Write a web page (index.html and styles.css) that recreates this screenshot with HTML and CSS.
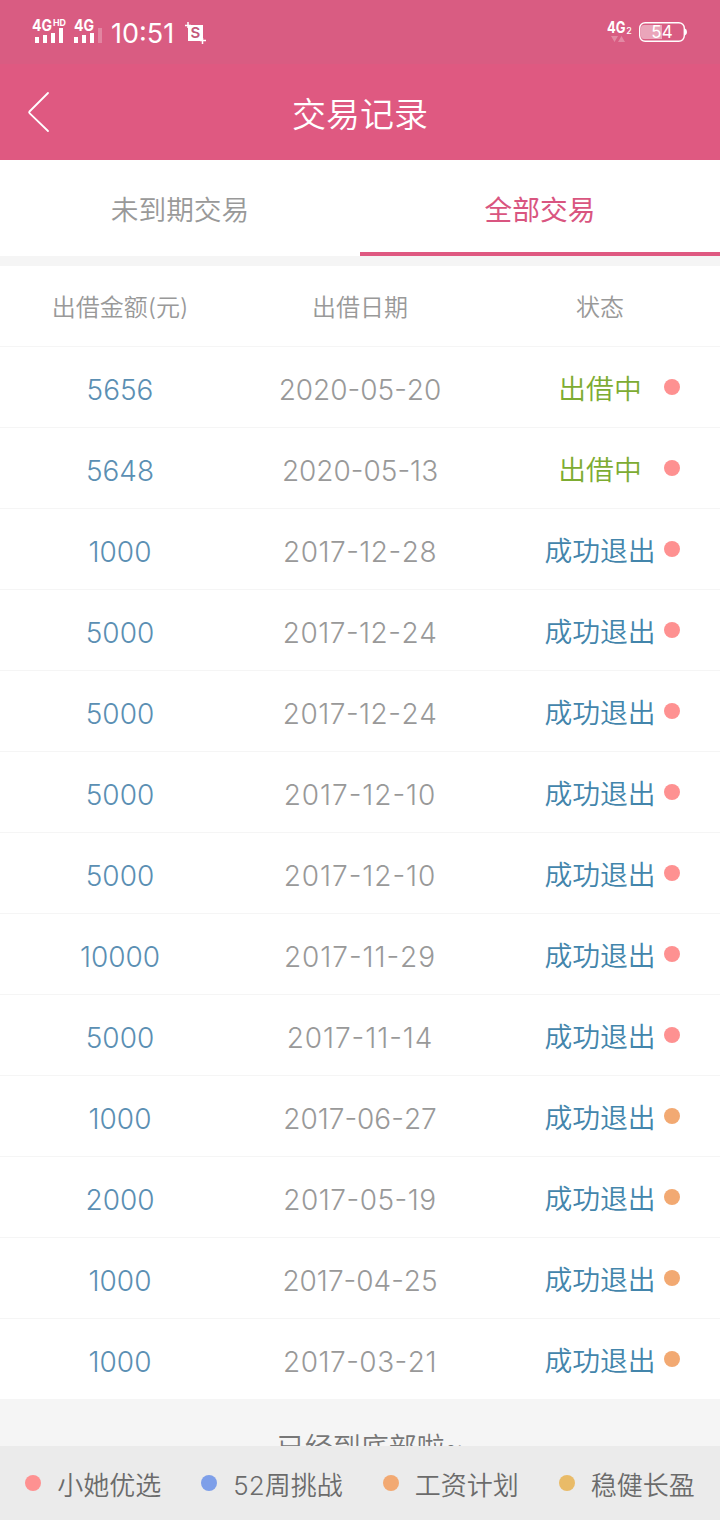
FILE: index.html
```html
<!DOCTYPE html>
<html lang="zh-CN">
<head>
    <meta charset="UTF-8">
    <meta name="viewport" content="width=device-width, initial-scale=1.0">
    <title>交易记录</title>
    <link rel="stylesheet" href="styles.css">
</head>
<body>
    <div class="page">
        <div class="statusbar">
            <svg class="signal" width="72" height="34" viewBox="0 -4 72 34">
                <g fill="#fff">
                    <text class="net" x="0" y="14" textLength="20" lengthAdjust="spacingAndGlyphs">4G</text>
                    <text class="net-hd" x="21" y="9" textLength="13" lengthAdjust="spacingAndGlyphs">HD</text>
                    <path d="M3 20h4v6h-4zM11 18h4v8h-4zM19 16h4v10h-4zM27 11h4v15h-4z"/>
                    <text class="net" x="42" y="14" textLength="20" lengthAdjust="spacingAndGlyphs">4G</text>
                    <path d="M42 20h4v6h-4zM50 18h4v8h-4zM58 16h4v10h-4z"/>
                    <path d="M66 11h4v15h-4z" opacity=".25"/>
                </g>
            </svg>
            <span class="clock">10:51</span>
            <svg class="shot" width="21" height="22" viewBox="0 0 21 22">
                <path d="M3 3h15v16h-15z" fill="#fff"/>
                <path d="M0 3.500h6M3 0v6M15 18.500h6M17.500 16v6" stroke="#fff" stroke-width="1.500"/>
                <text class="shot-s" x="10.300" y="16" text-anchor="middle">S</text>
            </svg>
            <svg class="net-right" width="26" height="30" viewBox="0 -4 26 30">
                <g fill="#fff">
                    <text class="net" x="0" y="14" textLength="18.500" lengthAdjust="spacingAndGlyphs">4G</text>
                    <text class="net-sub" x="19.200" y="15">2</text>
                    <path d="M4 17h7l-3.500 6zM11 23h7l-3.500-6z" opacity=".28"/>
                </g>
            </svg>
            <svg class="battery" width="50" height="22" viewBox="0 0 50 22">
                <rect x="1.700" y="1.700" width="44.600" height="18.600" rx="5.500" fill="none" stroke="#fff" stroke-width="1.400"/>
                <path d="M6 4h18v14h-18a3 3 0 0 1-3-3v-8a3 3 0 0 1 3-3z" fill="#fff" opacity=".45"/>
                <path d="M47 7.500q2 .5 2 3.500t-2 3.500z" fill="#fff"/>
                <text class="battery-num" x="24" y="17" text-anchor="middle">54</text>
            </svg>
        </div>

        <div class="navbar">
            <svg class="back" width="24" height="42" viewBox="0 0 24 42">
                <path d="M21 2L2.500 20.500q-.8.800 0 1.600L21 40" fill="none" stroke="#fff" stroke-width="1.800" stroke-linecap="round"/>
            </svg>
            <h1>交易记录</h1>
        </div>

        <div class="tabs">
            <div class="tab">未到期交易</div>
            <div class="tab active">全部交易</div>
        </div>

        <div class="list">
            <div class="row head"><span>出借金额(元)</span><span>出借日期</span><span>状态</span></div>
            <div class="row"><span class="amount">5656</span><span class="date">2020-05-20</span><span class="state lending">出借中</span><i class="dot red"></i></div>
            <div class="row"><span class="amount">5648</span><span class="date">2020-05-13</span><span class="state lending">出借中</span><i class="dot red"></i></div>
            <div class="row"><span class="amount">1000</span><span class="date loose">2017-12-28</span><span class="state">成功退出</span><i class="dot red"></i></div>
            <div class="row"><span class="amount">5000</span><span class="date loose">2017-12-24</span><span class="state">成功退出</span><i class="dot red"></i></div>
            <div class="row"><span class="amount">5000</span><span class="date loose">2017-12-24</span><span class="state">成功退出</span><i class="dot red"></i></div>
            <div class="row"><span class="amount">5000</span><span class="date looser">2017-12-10</span><span class="state">成功退出</span><i class="dot red"></i></div>
            <div class="row"><span class="amount">5000</span><span class="date looser">2017-12-10</span><span class="state">成功退出</span><i class="dot red"></i></div>
            <div class="row"><span class="amount">10000</span><span class="date looser">2017-11-29</span><span class="state">成功退出</span><i class="dot red"></i></div>
            <div class="row"><span class="amount">5000</span><span class="date looser">2017-11-14</span><span class="state">成功退出</span><i class="dot red"></i></div>
            <div class="row"><span class="amount">1000</span><span class="date">2017-06-27</span><span class="state">成功退出</span><i class="dot orange"></i></div>
            <div class="row"><span class="amount">2000</span><span class="date loose">2017-05-19</span><span class="state">成功退出</span><i class="dot orange"></i></div>
            <div class="row"><span class="amount">1000</span><span class="date">2017-04-25</span><span class="state">成功退出</span><i class="dot orange"></i></div>
            <div class="row"><span class="amount">1000</span><span class="date loose">2017-03-21</span><span class="state">成功退出</span><i class="dot orange"></i></div>
        </div>

        <div class="bottom-tip">已经到底部啦<span class="tilde">~</span></div>

        <div class="legend">
            <div class="legend-item"><i class="dot red"></i>小她优选</div>
            <div class="legend-item"><i class="dot blue"></i>52周挑战</div>
            <div class="legend-item"><i class="dot orange"></i>工资计划</div>
            <div class="legend-item"><i class="dot yellow"></i>稳健长盈</div>
        </div>
    </div>
</body>
</html>
```

FILE: styles.css
```css
* {
    box-sizing: border-box;
}
body {
    margin: 0;
    font-family: Inter, 'Noto Sans CJK SC', sans-serif;
    font-weight: 350;
    background-color: #f5f5f5;
}
.page {
    display: flex;
    flex-direction: column;
    width: 720px;
    height: 1520px;
    overflow: hidden;
}

/* status bar */
.statusbar {
    display: flex;
    align-items: flex-start;
    flex: none;
    height: 64px;
    padding: 0 32px;
    background-color: #d95c82;
    color: #ffffff;
}
.signal {
    margin-top: 13px;
}
.net {
    font-size: 16px;
    font-weight: 700;
}
.net-hd {
    font-size: 9px;
    font-weight: 700;
}
.net-sub {
    font-size: 9px;
    font-weight: 500;
}
.clock {
    width: 68px;
    margin: 18px 0 0 7px;
    font-size: 27px;
    font-weight: 400;
    line-height: 32px;
    white-space: nowrap;
}
.shot {
    margin: 22px 0 0 6px;
}
.shot-s {
    font-size: 15px;
    font-weight: 600;
    fill: #c2587a;
}
.net-right {
    margin: 15px 0 0 auto;
}
.battery {
    margin: 21px 0 0 5px;
}
.battery-num {
    font-size: 17px;
    font-weight: 400;
    fill: #ffffff;
}

/* title */
.navbar {
    display: grid;
    grid-template-columns: 100px 1fr 100px;
    align-items: center;
    flex: none;
    height: 96px;
    background-color: #df5981;
    color: #ffffff;
}
.back {
    margin-left: 27px;
}
h1 {
    margin: 5px 0 0;
    font-size: 34px;
    font-weight: 350;
    line-height: 48px;
    text-align: center;
}

.tabs {
    display: flex;
    flex: none;
    height: 96px;
    background-color: #ffffff;
}
.tab {
    flex: 1;
    padding-top: 4px;
    font-size: 27.700px;
    line-height: 92px;
    text-align: center;
    color: #999999;
}
.tab.active {
    border-bottom: 4px solid #df5981;
    font-weight: 400;
    color: #d95580;
}

/* records */
.list {
    flex: none;
    margin-top: 10px;
    background-color: #ffffff;
}
.row {
    display: grid;
    grid-template-columns: 240px 240px 184px 16px;
    align-items: center;
    height: 81px;
    border-bottom: 1px solid #f5f5f5;
    text-align: center;
}
.row.head {
    grid-template-columns: repeat(3, 240px);
    font-size: 24px;
    color: #999999;
}
.row.head span {
    padding-bottom: 2px;
}
.amount, .date {
    padding-top: 5px;
    font-size: 28px;
    font-weight: 320;
    font-kerning: none;
}
.amount {
    color: #5b8fb3;
}
.date {
    font-feature-settings: 'case';
    color: #999999;
}
.loose {
    letter-spacing: 0.500px;
}
.looser {
    letter-spacing: 0.950px;
}
.state {
    padding-bottom: 1px;
    margin-right: -56px;
    font-size: 27.800px;
    color: #4385ab;
}
.state.lending {
    color: #7dac32;
}
.dot {
    flex: none;
    width: 16px;
    height: 16px;
    border-radius: 50%;
}
.red {
    background-color: #fe9191;
}
.blue {
    background-color: #7e9fe9;
}
.orange {
    background-color: #f2a972;
}
.yellow {
    background-color: #e9bb68;
}

/* runs under the legend bar */
.bottom-tip {
    flex: none;
    height: 47px;
    margin-bottom: -1px;
    padding: 28px 0 0 20px;
    overflow: hidden;
    font-size: 28px;
    line-height: 40px;
    text-align: center;
    color: #777777;
}
.tilde {
    line-height: 20px;
    vertical-align: 3px;
}
.legend {
    display: flex;
    justify-content: center;
    align-items: center;
    gap: 40px;
    flex: none;
    height: 74px;
    padding-top: 5px;
    background-color: #ebebeb;
    color: #6b6b6b;
}
.legend-item {
    display: flex;
    align-items: center;
    gap: 16px;
    font-size: 26px;
    line-height: 40px;
    white-space: nowrap;
}
.legend-item .dot {
    margin-bottom: 5px;
}
```
